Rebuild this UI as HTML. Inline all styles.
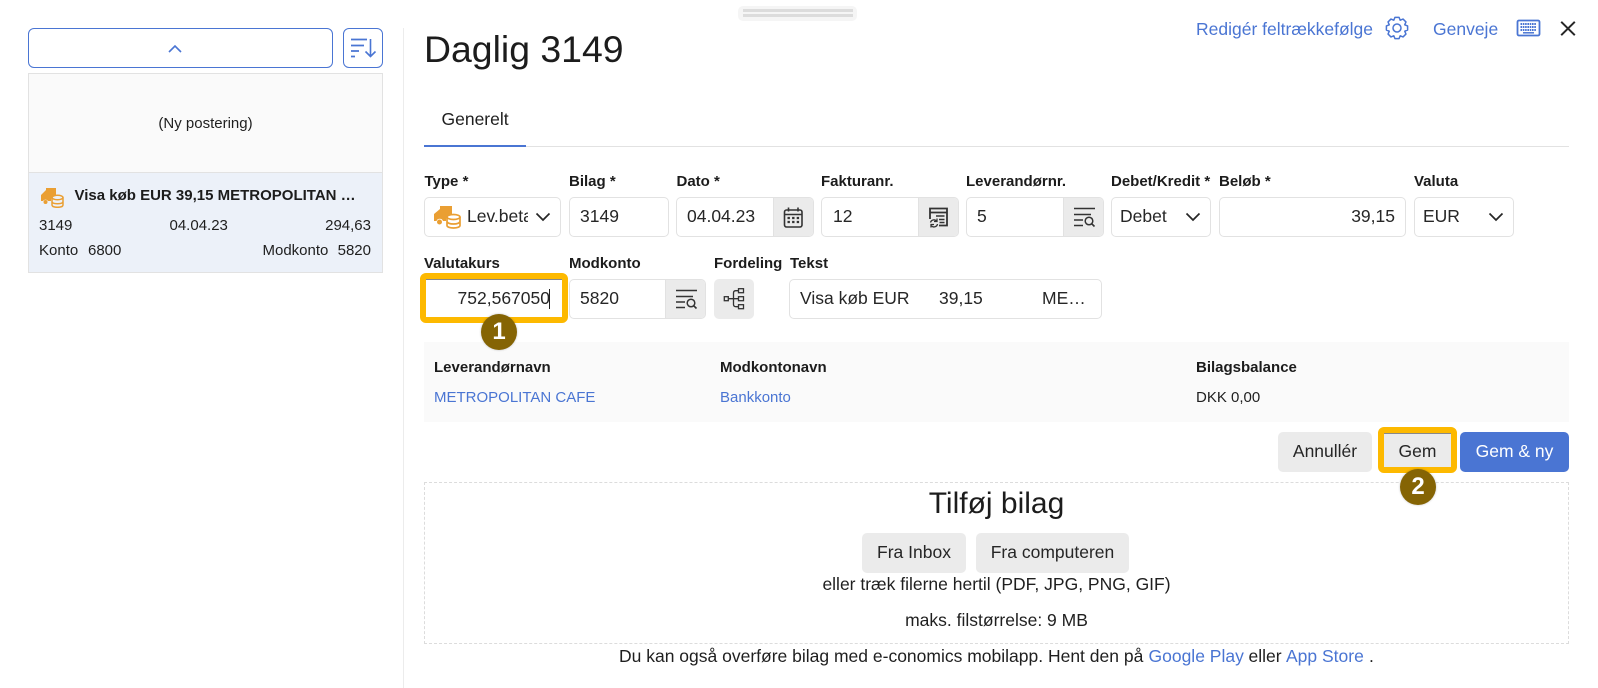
<!DOCTYPE html>
<html><head><meta charset="utf-8"><style>
*{box-sizing:border-box}
html,body{margin:0;padding:0;width:1598px;height:688px;overflow:hidden;background:#fff}
body{font-family:"Liberation Sans",sans-serif;color:#1f1f1f;position:relative}
.a{position:absolute;white-space:nowrap}
.l{position:absolute;white-space:nowrap;font-weight:700;font-size:15px;line-height:16px;color:#1c1c1c}
.i{position:absolute;height:40px;border:1px solid #e2e2e2;border-radius:5px;background:#fff;font-size:17.5px;line-height:36px;padding-left:10px;white-space:nowrap;overflow:hidden;color:#262626}
.ad{position:absolute;top:0;right:0;bottom:0;width:40px;background:#ebebeb;border-left:1px solid #e2e2e2}
.ad svg,.fb svg{position:absolute;left:9px;top:9px}
.ad svg.s{left:10px}
.b{position:absolute;height:40px;border-radius:5px;background:#ebebeb;font-size:17.5px;line-height:38px;text-align:center;color:#262626}
.bl{color:#4a75d3}
.c{position:absolute;z-index:5;width:36px;height:36px;border-radius:50%;background:#856404;color:#fff;font-weight:700;font-size:24px;line-height:36px;text-align:center;box-shadow:0 0 2px rgba(0,0,0,.25)}
.t{font-size:15px;line-height:16px}
.f{font-size:17.5px;line-height:19px;top:647px}
</style></head><body>

<div class="a" style="left:738px;top:6px;width:119px;height:15px;background:#f5f5f5;border-radius:5px"></div>
<div class="a" style="left:743px;top:9px;width:110px;height:3px;background:#dcdcdc"></div>
<div class="a" style="left:743px;top:14px;width:110px;height:3px;background:#dcdcdc"></div>

<!-- left column -->
<div class="a" style="left:28px;top:28px;width:305px;height:40px;border:1px solid #4a75d3;border-radius:6px"></div>
<svg class="a" style="left:167px;top:43px" width="16" height="11" viewBox="0 0 16 11"><path d="M2 9L8 3L14 9" fill="none" stroke="#4a75d3" stroke-width="1.6"/></svg>
<div class="a" style="left:343px;top:28px;width:40px;height:40px;border:1px solid #4a75d3;border-radius:6px"></div>
<svg class="a" style="left:349px;top:36px" width="30" height="24" viewBox="0 0 30 24"><path d="M2 3.500H18M2 9.500H15M2 15H10M2 20.500H6" fill="none" stroke="#4a75d3" stroke-width="1.7"/><path d="M21.500 3V20.500M16.500 15.500L21.500 20.500L26.500 15.500" fill="none" stroke="#4a75d3" stroke-width="1.6"/></svg>

<div class="a" style="left:28px;top:73px;width:355px;height:100px;background:#fafafa;border:1px solid #e2e2e2"></div>
<div class="a t" style="left:28px;width:355px;top:116px;text-align:center">(Ny postering)</div>
<div class="a" style="left:28px;top:172px;width:355px;height:101px;background:#ecf1f9;border:1px solid #e2e2e2"></div>
<svg class="a" style="left:40px;top:187px" width="24" height="21" viewBox="0 0 24 21"><path d="M6 1H16V9C12 9.500 11 11 11 14H8A3 3 0 0 0 3 14H1V8L6 3Z" fill="#ea9f33"/><circle cx="5.500" cy="15" r="2" fill="#ea9f33"/><g fill="none" stroke="#ea9f33" stroke-width="1.500"><ellipse cx="17.500" cy="10.500" rx="5.500" ry="2.200"/><path d="M12 10.500V18C12 19.500 14.500 20.300 17.500 20.300S23 19.500 23 18V10.500M12 14.500C12 16 14.500 16.700 17.500 16.700S23 16 23 14.500"/></g></svg>
<div class="a t" style="left:74.500px;top:188px;font-weight:700;color:#1c1c1c">Visa køb EUR 39,15 METROPOLITAN …</div>
<div class="a t" style="left:39px;top:218px">3149</div>
<div class="a t" style="left:169.500px;top:218px">04.04.23</div>
<div class="a t" style="right:1227px;top:218px">294,63</div>
<div class="a t" style="left:39px;top:243px">Konto</div>
<div class="a t" style="left:88px;top:243px">6800</div>
<div class="a t" style="left:262.500px;top:243px">Modkonto</div>
<div class="a t" style="right:1227px;top:243px">5820</div>

<div class="a" style="left:403px;top:28px;width:1px;height:660px;background:#ececec"></div>

<!-- header -->
<div class="a" style="left:424px;top:27px;font-size:37.4px;line-height:44px;color:#1c1c1c">Daglig 3149</div>
<div class="a bl" style="left:1196px;top:19px;font-size:17.5px;line-height:20px">Redigér feltrækkefølge</div>
<svg class="a" style="left:1385px;top:16px" width="24" height="24" viewBox="0 0 24 24"><path fill="none" stroke="#4a75d3" stroke-width="1.500" stroke-linejoin="round" d="M22.600 9.940L22.600 14.060L19.760 15.210L20.950 18.040L18.040 20.950L15.210 19.760L14.060 22.600L9.940 22.600L8.790 19.760L5.960 20.950L3.050 18.040L4.240 15.210L1.400 14.060L1.400 9.940L4.240 8.790L3.050 5.960L5.960 3.050L8.790 4.240L9.940 1.400L14.060 1.400L15.210 4.240L18.040 3.050L20.950 5.960L19.760 8.790Z"/><circle cx="12" cy="12" r="4" fill="none" stroke="#4a75d3" stroke-width="1.500"/></svg>
<div class="a bl" style="left:1433px;top:19px;font-size:17.5px;line-height:20px">Genveje</div>
<svg class="a" style="left:1516px;top:19px" width="25" height="18" viewBox="0 0 25 18"><rect x="1.500" y="1.500" width="22" height="15" rx="1.500" fill="none" stroke="#4a75d3" stroke-width="1.800"/><path d="M4.500 5H20.500M4.500 8H20.500M4.500 11H20.500" stroke="#4a75d3" stroke-width="1.900" stroke-dasharray="1.600 .7" fill="none"/><path d="M7 13.800H18" stroke="#4a75d3" stroke-width="1.500"/></svg>
<svg class="a" style="left:1560px;top:21px" width="16" height="15" viewBox="0 0 16 15"><path d="M1.200 .8L14.800 14.200M14.800 .8L1.200 14.200" stroke="#262626" stroke-width="2" fill="none"/></svg>

<!-- tabs -->
<div class="a" style="left:441.500px;top:109px;font-size:17.5px;line-height:20px">Generelt</div>
<div class="a" style="left:424px;top:146px;width:1145px;height:1px;background:#e2e2e2"></div>
<div class="a" style="left:424px;top:144.500px;width:102px;height:2px;background:#4a75d3"></div>

<!-- labels row 1 -->
<div class="l" style="left:424.500px;top:174px">Type *</div>
<div class="l" style="left:569px;top:174px">Bilag *</div>
<div class="l" style="left:676.500px;top:174px">Dato *</div>
<div class="l" style="left:821px;top:174px">Fakturanr.</div>
<div class="l" style="left:966px;top:174px">Leverandørnr.</div>
<div class="l" style="left:1111px;top:174px">Debet/Kredit *</div>
<div class="l" style="left:1219px;top:174px">Beløb *</div>
<div class="l" style="left:1414px;top:174px">Valuta</div>

<!-- inputs row 1 -->
<div class="i" style="left:424px;top:197px;width:137px"></div>
<svg class="a" style="left:433px;top:205px" width="28" height="24" viewBox="0 0 28 24"><path d="M7 1H19V10C14 10.500 13 12.500 13 16H10A3.500 3.500 0 0 0 3.500 16H1V9L7 4Z" fill="#ea9f33"/><circle cx="6.500" cy="17" r="2.500" fill="#ea9f33"/><g fill="none" stroke="#ea9f33" stroke-width="1.700"><ellipse cx="20.500" cy="12" rx="6.500" ry="2.500"/><path d="M14 12V20.500C14 22 17 23 20.500 23S27 22 27 20.500V12M14 16.300C14 18 17 19 20.500 19S27 18 27 16.300"/></g></svg>
<div class="a" style="left:467px;top:197px;width:61px;height:40px;overflow:hidden;font-size:17.5px;line-height:38px;color:#262626">Lev.betaling</div>
<svg class="a" style="left:535px;top:209px" width="16" height="16" viewBox="0 0 16 16"><path d="M1.500 4.500L8 11L14.500 4.500" fill="none" stroke="#262626" stroke-width="1.700"/></svg>

<div class="i" style="left:569px;top:197px;width:100px">3149</div>
<div class="i" style="left:676px;top:197px;width:138px">04.04.23<div class="ad"><svg width="22" height="22" viewBox="0 0 22 22"><rect x="1.500" y="3" width="17.500" height="17" rx="2" fill="none" stroke="#333" stroke-width="1.600"/><path d="M1.500 7.500H19M5.500 .5V4.500M15 .5V4.500" stroke="#333" stroke-width="1.600"/><path d="M4.500 11H17M4.500 15H17" stroke="#333" stroke-width="2.200" stroke-dasharray="2.400 2.200"/></svg></div></div>
<div class="i" style="left:821px;top:197px;width:138px;padding-left:11px">12<div class="ad"><svg width="22" height="22" viewBox="0 0 22 22"><path d="M2 12V1.500H19V18.500H11" fill="none" stroke="#333" stroke-width="1.800"/><path d="M2 5.500H19" stroke="#333" stroke-width="1.800"/><path d="M8 9H16.500M11 12.500H16.500M11.500 15.500H16.500" stroke="#333" stroke-width="1.400"/><path d="M2.500 15.500A3.500 3.500 0 0 1 8.500 14M9.500 17A3.500 3.500 0 0 1 3.500 18.800M9 11.500V14.500H6M3 20.500V17.500H6" fill="none" stroke="#333" stroke-width="1.300"/></svg></div></div>
<div class="i" style="left:966px;top:197px;width:138px">5<div class="ad"><svg class="s" width="24" height="22" viewBox="0 0 24 22"><path d="M0 1.500H21M0 7.500H17M0 13H9M0 18.500H9" stroke="#333" stroke-width="1.500" fill="none"/><circle cx="15" cy="14" r="3.800" fill="none" stroke="#333" stroke-width="1.500"/><path d="M17.800 16.800L20.500 19.500" stroke="#333" stroke-width="1.600"/></svg></div></div>
<div class="i" style="left:1111px;top:197px;width:100px;padding-left:8px">Debet</div>
<svg class="a" style="left:1185px;top:209px" width="16" height="16" viewBox="0 0 16 16"><path d="M1.500 4.500L8 11L14.500 4.500" fill="none" stroke="#262626" stroke-width="1.700"/></svg>
<div class="i" style="left:1219px;top:197px;width:187px;text-align:right;padding:0 10px 0 0">39,15</div>
<div class="i" style="left:1414px;top:197px;width:100px;padding-left:8px">EUR</div>
<svg class="a" style="left:1488px;top:209px" width="16" height="16" viewBox="0 0 16 16"><path d="M1.500 4.500L8 11L14.500 4.500" fill="none" stroke="#262626" stroke-width="1.700"/></svg>

<!-- labels row 2 -->
<div class="l" style="left:424px;top:256px">Valutakurs</div>
<div class="l" style="left:569px;top:256px">Modkonto</div>
<div class="l" style="left:714px;top:256px">Fordeling</div>
<div class="l" style="left:790px;top:256px">Tekst</div>

<!-- inputs row 2 -->
<div class="a" style="left:420px;top:273px;width:148px;height:50px;border:6px solid #fdb900;border-radius:6px;box-shadow:inset 0 1px 0 #888;background:#fff"></div>
<div class="a" style="left:426px;top:279px;width:124px;font-size:17.5px;line-height:38px;text-align:right;color:#262626">752,567050</div>
<div class="a" style="left:549px;top:289px;width:1px;height:20px;background:#222"></div>
<div class="c" style="left:481px;top:314px">1</div>

<div class="i" style="left:569px;top:279px;width:137px">5820<div class="ad"><svg class="s" width="24" height="22" viewBox="0 0 24 22"><path d="M0 1.500H21M0 7.500H17M0 13H9M0 18.500H9" stroke="#333" stroke-width="1.500" fill="none"/><circle cx="15" cy="14" r="3.800" fill="none" stroke="#333" stroke-width="1.500"/><path d="M17.800 16.800L20.500 19.500" stroke="#333" stroke-width="1.600"/></svg></div></div>
<div class="b fb" style="left:714px;top:279px;width:40px"><svg width="22" height="22" viewBox="0 0 22 22"><g fill="none" stroke="#333" stroke-width="1.300"><rect x="1.300" y="8.700" width="4" height="4"/><rect x="15.500" y=".7" width="5" height="4"/><rect x="15.500" y="8.700" width="5" height="4"/><rect x="15.500" y="16.700" width="5" height="4"/><path d="M5.500 10.700H10.500M15.500 2.700H13Q10.500 2.700 10.500 5V16.500Q10.500 18.700 13 18.700H15.500M10.500 10.700H15.500"/></g></svg></div>
<div class="i" style="left:789px;top:279px;width:313px">Visa køb EUR<span class="a" style="left:149px;top:0">39,15</span><span class="a" style="left:252px;top:0">ME…</span></div>

<!-- summary -->
<div class="a" style="left:424px;top:342px;width:1145px;height:80px;background:#fafafa"></div>
<div class="l" style="left:434px;top:360px">Leverandørnavn</div>
<div class="l" style="left:720px;top:360px">Modkontonavn</div>
<div class="l" style="left:1196px;top:360px">Bilagsbalance</div>
<div class="a t bl" style="left:434px;top:390px">METROPOLITAN CAFE</div>
<div class="a t bl" style="left:720px;top:390px">Bankkonto</div>
<div class="a t" style="left:1196px;top:390px">DKK 0,00</div>

<!-- actions -->
<div class="b" style="left:1278px;top:432px;width:94px">Annullér</div>
<div class="b" style="left:1378px;top:427px;width:79px;height:46px;border:6px solid #fdb900;border-radius:6px;line-height:36px;box-shadow:inset 0 1px 0 #888">Gem</div>
<div class="b" style="left:1460px;top:432px;width:109px;background:#4a75d3;color:#fff">Gem &amp; ny</div>

<!-- upload -->
<div class="a" style="left:424px;top:482px;width:1145px;height:162px;border:1px dashed #dcdcdc"></div>
<div class="c" style="left:1400px;top:469px">2</div>
<div class="a" style="left:424px;width:1145px;top:486px;text-align:center;font-size:30px;line-height:35px;color:#1c1c1c">Tilføj bilag</div>
<div class="b" style="left:862px;top:533px;width:104px">Fra Inbox</div>
<div class="b" style="left:976px;top:533px;width:153px">Fra computeren</div>
<div class="a" style="left:424px;width:1145px;top:575px;text-align:center;font-size:17.5px;line-height:19px">eller træk filerne hertil (PDF, JPG, PNG, GIF)</div>
<div class="a" style="left:424px;width:1145px;top:611px;text-align:center;font-size:17.5px;line-height:19px">maks. filstørrelse: 9 MB</div>
<div class="a f" style="left:619px">Du kan også overføre bilag med e-conomics mobilapp. Hent den på</div>
<div class="a f bl" style="left:1148.500px">Google Play</div>
<div class="a f" style="left:1248.500px">eller</div>
<div class="a f bl" style="left:1286px">App Store</div>
<div class="a f" style="left:1369px">.</div>
</body></html>
